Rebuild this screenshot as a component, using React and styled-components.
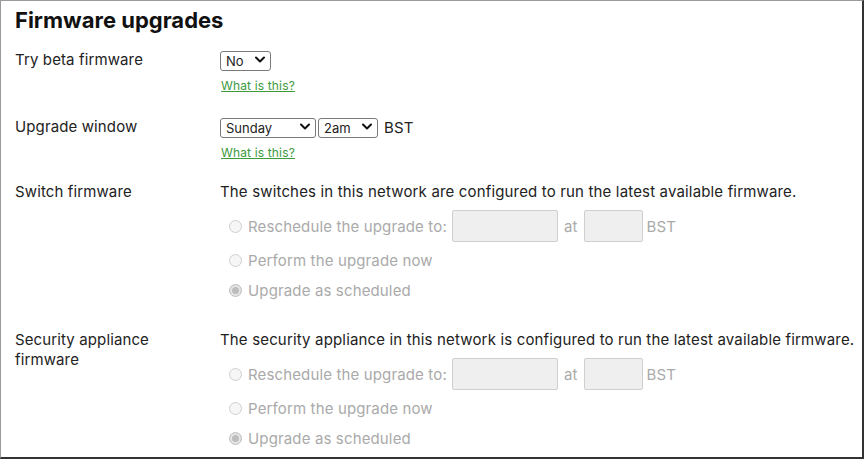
import React from "react";
import styled, { createGlobalStyle } from "styled-components";

const Global = createGlobalStyle`
  html, body { margin: 0; padding: 0; background: #fff; }
  body { font-family: Inter, "Noto Sans", "Liberation Sans", sans-serif; color: #222; }
  * { box-sizing: border-box; }
`;

const Frame = styled.div`
  width: 864px;
  height: 459px;
  border-top: 1px solid #9a9a9a;
  border-left: 1px solid #9a9a9a;
  border-right: 2px solid #333;
  border-bottom: 2px solid #333;
  padding: 7px 14px 0;
  overflow: hidden;
`;

const Title = styled.h1`
  margin: 0;
  font-size: 22px;
  line-height: 24px;
  letter-spacing: 0;
  font-weight: 700;
  color: #111;
`;

const Field = styled.div`
  display: grid;
  grid-template-columns: 205px 1fr;
  margin-top: ${(p) => p.$top}px;
`;

const Label = styled.div`
  font-size: 15px;
  line-height: 20px;
  letter-spacing: 0.12px;
  width: 165px;
  color: #222;
`;

const Control = styled.div`
  display: flex;
  flex-direction: column;
  align-items: flex-start;
`;

const Inline = styled.div`
  display: flex;
  align-items: center;
  gap: 2px;
  height: 20px;
`;

const SelectWrap = styled.div`
  position: relative;
  width: ${(p) => p.$w}px;
  height: 20px;
`;

const Select = styled.select`
  appearance: none;
  -webkit-appearance: none;
  width: 100%;
  height: 100%;
  border: 1px solid #7a7a7a;
  border-radius: 3px;
  background: #fff;
  font-family: Inter, "Noto Sans", sans-serif;
  font-size: 13px;
  color: #222;
  padding: 0 0 0 5px;
  margin: 0;
  outline: none;
`;

const Chevron = styled.svg`
  position: absolute;
  right: 6px;
  top: 6px;
  width: 10px;
  height: 8px;
  pointer-events: none;
`;

const Tz = styled.span`
  font-size: 15px;
  letter-spacing: 0.16px;
  margin-left: 4px;
  color: ${(p) => (p.$muted ? "#aaa" : "#222")};
`;

const Help = styled.a`
  margin-top: 9px;
  margin-left: 1px;
  font-size: 12px;
  line-height: 14px;
  letter-spacing: 0.15px;
  color: #3c9a3c;
  text-decoration: underline;
`;

const Desc = styled.div`
  font-size: 15px;
  line-height: 20px;
  letter-spacing: 0.16px;
  white-space: nowrap;
  color: #222;
`;

const Options = styled.div`
  display: flex;
  flex-direction: column;
  padding-top: 8px;
  padding-left: 9px;
`;

const OptionRow = styled.label`
  display: flex;
  align-items: center;
  height: ${(p) => p.$h}px;
  font-size: 15px;
  letter-spacing: 0.14px;
  color: #aaa;
  white-space: nowrap;
`;

const Radio = styled.input.attrs({ type: "radio", disabled: true })`
  appearance: none;
  -webkit-appearance: none;
  flex: none;
  width: 13px;
  height: 13px;
  margin: 0 6px 0 0;
  border-radius: 50%;
  border: 1px solid #cfcfcf;
  background: #f6f6f6;
  &:checked {
    border-color: #c4c4c4;
    background: #bdbdbd;
    box-shadow: inset 0 0 0 2px #e6e6e6;
  }
`;

const Box = styled.span`
  display: inline-block;
  width: ${(p) => p.$w}px;
  height: 32px;
  margin-left: ${(p) => p.$ml}px;
  background: #efefef;
  border: 1px solid #cfcfcf;
  border-radius: 2px;
`;

const At = styled.span`
  margin: 0 6px;
`;

function Dropdown({ w, value, options }) {
  return (
    <SelectWrap $w={w}>
      <Select defaultValue={value}>
        {options.map((o) => (
          <option key={o}>{o}</option>
        ))}
      </Select>
      <Chevron viewBox="0 0 10 8">
        <path d="M1 1.5 L5 5.5 L9 1.5" fill="none" stroke="#111" strokeWidth="2" strokeLinecap="round" strokeLinejoin="round" />
      </Chevron>
    </SelectWrap>
  );
}

function Upgrade({ label, text, top }) {
  return (
    <Field $top={top}>
      <Label>{label}</Label>
      <Control>
        <Desc>{text}</Desc>
        <Options>
          <OptionRow $h={32}>
            <Radio name={label} />
            Reschedule the upgrade to:
            <Box $w={106} $ml={5} />
            <At>at</At>
            <Box $w={59} $ml={0} />
            <Tz $muted>BST</Tz>
          </OptionRow>
          <OptionRow $h={36}>
            <Radio name={label} />
            Perform the upgrade now
          </OptionRow>
          <OptionRow $h={24}>
            <Radio name={label} defaultChecked />
            Upgrade as scheduled
          </OptionRow>
        </Options>
      </Control>
    </Field>
  );
}

export default function App() {
  return (
    <Frame>
      <Global />
      <Title>Firmware upgrades</Title>
      <Field $top={18}>
        <Label>Try beta firmware</Label>
        <Control>
          <Inline>
            <Dropdown w={51} value="No" options={["No", "Yes"]} />
          </Inline>
          <Help href="#">What is this?</Help>
        </Control>
      </Field>
      <Field $top={24}>
        <Label>Upgrade window</Label>
        <Control>
          <Inline>
            <Dropdown w={96} value="Sunday" options={["Sunday", "Monday", "Tuesday", "Wednesday", "Thursday", "Friday", "Saturday"]} />
            <Dropdown w={60} value="2am" options={["12am", "1am", "2am", "3am", "4am"]} />
            <Tz>BST</Tz>
          </Inline>
          <Help href="#">What is this?</Help>
        </Control>
      </Field>
      <Upgrade
        top={22}
        label="Switch firmware"
        text="The switches in this network are configured to run the latest available firmware."
      />
      <Upgrade
        top={28}
        label="Security appliance firmware"
        text="The security appliance in this network is configured to run the latest available firmware."
      />
    </Frame>
  );
}
